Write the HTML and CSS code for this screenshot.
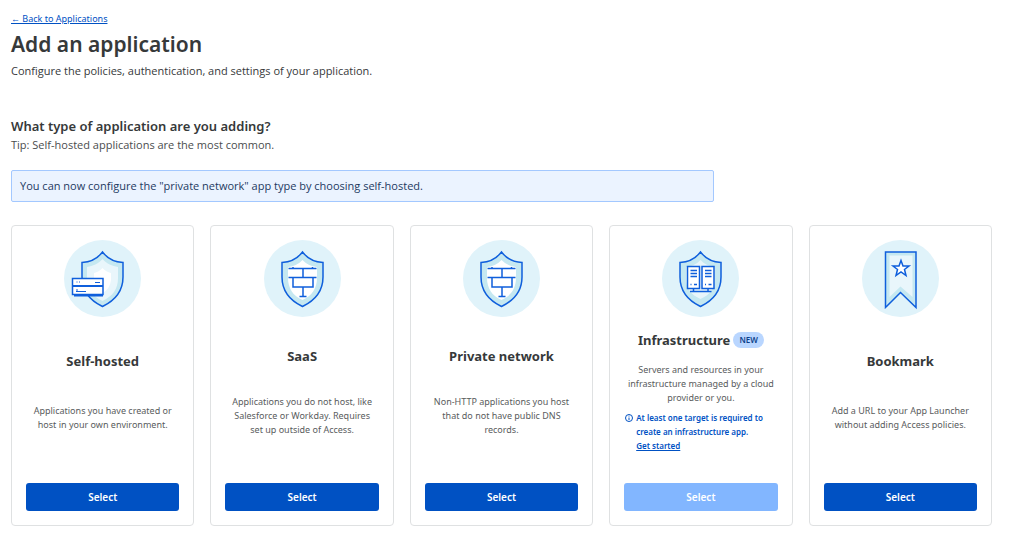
FILE: index.html
```html
<!DOCTYPE html>
<html lang="en">
<head>
  <meta charset="UTF-8">
  <title>Add an application</title>
  <link rel="stylesheet" href="styles.css">
</head>
<body>
  <main>
    <a class="back" href="#">← Back to Applications</a>
    <h1>Add an application</h1>
    <p class="intro">Configure the policies, authentication, and settings of your application.</p>

    <h2>What type of application are you adding?</h2>
    <p class="tip">Tip: Self-hosted applications are the most common.</p>

    <div class="notice">You can now configure the "private network" app type by choosing self-hosted.</div>

    <div class="cards">
      <section class="card">
        <svg class="icon" viewBox="0 0 77 77">
          <circle class="disc" cx="38.5" cy="38.5" r="38.5"/>
          <path class="shade" d="M38.5 12C34 18 27 22 18 22.500V37C18 50 25 60 38.500 66.500C52 60 59 50 59 37V22.500C50 22 43 18 38.500 12Z"/>
          <path class="pale" d="M38.500 19C34 24 29 26 23 27V38C23 49 28 56 38.500 61C49 56 54 49 54 38V27C48 26 43 24 38.500 19Z"/>
          <path class="white" d="M38.500 28Q35 32 30 33V40Q31 49 38.500 53Q46 49 47 40V33Q42 32 38.500 28Z"/>
          <path class="line" d="M38.500 12C34 18 27 22 18 22.500V37C18 50 25 60 38.500 66.500C52 60 59 50 59 37V22.500C50 22 43 18 38.500 12Z"/>
          <path class="line solid" d="M8.500 38.500H39V54.500H8.500Z"/>
          <path class="line thin" d="M31 42.500H36M12 51.500H22M12 50H14M12.500 42H13.500M15 42H16"/>
          <path class="line thick" d="M8 46H39M10 55.500H39"/>
        </svg>
        <div class="info">
          <h3>Self-hosted</h3>
          <p>Applications you have created or host in your own environment.</p>
        </div>
        <button>Select</button>
      </section>

      <section class="card">
        <svg class="icon" viewBox="0 0 77 77">
          <circle class="disc" cx="38.5" cy="38.5" r="38.5"/>
          <path class="shade" d="M38.500 12C34 18 27 22 18 22.500V37C18 50 25 60 38.500 66.500C52 60 59 50 59 37V22.500C50 22 43 18 38.500 12Z"/>
          <path class="white" d="M38.500 20Q33 26 24 27V38C24 48 29 56 38.500 60C48 56 53 48 53 38V27Q44 26 38.500 20Z"/>
          <path class="line" d="M38.500 12C34 18 27 22 18 22.500V37C18 50 25 60 38.500 66.500C52 60 59 50 59 37V22.500C50 22 43 18 38.500 12Z"/>
          <path class="line" d="M24.500 28.500H52.500M24.500 37.500H52.500M39 28.500V37.500M29 37.500V47H49V37.500M39 47V56.500M35.500 56.500H42.500M29 27V28M48.500 27V28"/>
        </svg>
        <div class="info">
          <h3>SaaS</h3>
          <p>Applications you do not host, like Salesforce or Workday. Requires set up outside of Access.</p>
        </div>
        <button>Select</button>
      </section>

      <section class="card">
        <svg class="icon" viewBox="0 0 77 77">
          <circle class="disc" cx="38.5" cy="38.5" r="38.5"/>
          <path class="shade" d="M38.500 12C34 18 27 22 18 22.500V37C18 50 25 60 38.500 66.500C52 60 59 50 59 37V22.500C50 22 43 18 38.500 12Z"/>
          <path class="white" d="M38.500 20Q33 26 24 27V38C24 48 29 56 38.500 60C48 56 53 48 53 38V27Q44 26 38.500 20Z"/>
          <path class="line" d="M38.500 12C34 18 27 22 18 22.500V37C18 50 25 60 38.500 66.500C52 60 59 50 59 37V22.500C50 22 43 18 38.500 12Z"/>
          <path class="line" d="M24.500 28.500H52.500M24.500 37.500H52.500M39 28.500V37.500M29 37.500V47H49V37.500M39 47V56.500M35.500 56.500H42.500M29 27V28M48.500 27V28"/>
        </svg>
        <div class="info">
          <h3>Private network</h3>
          <p>Non-HTTP applications you host that do not have public DNS records.</p>
        </div>
        <button>Select</button>
      </section>

      <section class="card">
        <svg class="icon" viewBox="0 0 77 77">
          <circle class="disc" cx="38.5" cy="38.5" r="38.5"/>
          <path class="shade" d="M38.500 12C34 18 27 22 18 22.500V37C18 50 25 60 38.500 66.500C52 60 59 50 59 37V22.500C50 22 43 18 38.500 12Z"/>
          <path class="pale" d="M38.500 20Q33 26 24 27V38C24 48 29 55 38.500 59C48 55 53 48 53 38V27Q44 26 38.500 20Z"/>
          <path class="line" d="M38.500 12C34 18 27 22 18 22.500V37C18 50 25 60 38.500 66.500C52 60 59 50 59 37V22.500C50 22 43 18 38.500 12Z"/>
          <path class="line solid" d="M25.500 26.500H37.500V48.500H25.500ZM40 26.500H52V48.500H40Z"/>
          <path class="line" d="M28.500 30.500H35M28.500 33.500H35M28.500 36.500H35M43 30.500H49.500M43 33.500H49.500M43 36.500H49.500M28.500 44.500H29.500M32 44.500H35M43 44.500H44M46.500 44.500H49.500M31.500 48.500V51.500M46 48.500V51.500M28 51.500H49.500"/>
        </svg>
        <div class="info">
          <h3>Infrastructure <span class="badge">NEW</span></h3>
          <p>Servers and resources in your infrastructure managed by a cloud provider or you.</p>
          <div class="note">
            <svg viewBox="0 0 10 10"><circle cx="5" cy="5" r="3.500"/><path d="M5 4.500V7M5 2.700V3.500"/></svg>
            <div>At least one target is required to create an infrastructure app.<br><a href="#">Get started</a></div>
          </div>
        </div>
        <button disabled>Select</button>
      </section>

      <section class="card">
        <svg class="icon" viewBox="0 0 77 77">
          <circle class="disc" cx="38.5" cy="38.5" r="38.5"/>
          <path class="shade" d="M23.500 12H54V67.500L38.500 52.500L23.500 67.500Z"/>
          <path class="pale" d="M27.500 15.500H50.500V57L38.500 46.500L27.500 57Z"/>
          <path class="line" d="M23.500 12H54V67.500L38.500 52.500L23.500 67.500Z"/>
          <path class="line solid" d="M39 20.500L41 26H47L42.500 29.500L44 35.500L39 32L34 35.500L35.500 29.500L31 26H37Z"/>
        </svg>
        <div class="info">
          <h3>Bookmark</h3>
          <p>Add a URL to your App Launcher without adding Access policies.</p>
        </div>
        <button>Select</button>
      </section>
    </div>
  </main>
</body>
</html>
```
FILE: styles.css
```css
body {
  font-family: "Noto Sans", "Open Sans", sans-serif;
  font-size: 11px;
  line-height: 18px;
  color: #36393a;
  background: #fff;
  margin: 0;
}
main {
  padding: 10px 32px 14px 11px;
}
h1, h2, h3, p {
  margin: 0;
}
a {
  color: #0051c3;
}
.back {
  display: block;
  width: fit-content;
  font-size: 9px;
}
h1 {
  font-size: 21px;
  font-weight: 600;
  line-height: 32px;
}
.intro, .tip, .notice {
  font-family: "Open Sans", sans-serif;
}
.intro {
  margin-top: 2px;
}
h2 {
  font-size: 13px;
  font-weight: 600;
  line-height: 20px;
  margin-top: 36px;
}
.tip {
  color: #4a4d4e;
}
.notice {
  box-sizing: border-box;
  max-width: 703px;
  margin: 16px 0 23px;
  padding: 6px 8px;
  border: 1px solid #a3c8ff;
  border-radius: 2px;
  background: #ebf3ff;
  color: #1d3a5f;
}
.cards {
  display: grid;
  grid-template-columns: repeat(5, 1fr);
  gap: 16px;
}
.card {
  display: flex;
  flex-direction: column;
  align-items: center;
  padding: 14px;
  border: 1px solid #dfe1e2;
  border-radius: 4px;
  text-align: center;
}
.icon {
  width: 77px;
  height: 77px;
}
.disc {
  fill: #e0f3fa;
}
.shade {
  fill: #c5e8f1;
}
.pale {
  fill: #e9f6fb;
}
.white {
  fill: #fff;
}
.line {
  fill: none;
  stroke: #0f5fdc;
  stroke-width: 1.5;
}
.solid {
  fill: #fff;
}
.thin {
  stroke-width: 1;
}
.thick {
  stroke-width: 2;
}
.info {
  flex: 1;
  display: flex;
  flex-direction: column;
  justify-content: space-evenly;
  min-height: 149px;
}
.info h3 {
  display: flex;
  justify-content: center;
  align-items: center;
  gap: 3px;
  font-size: 13px;
  font-weight: 700;
  line-height: 20px;
}
.info p {
  padding: 0 3px;
  font-size: 9px;
  line-height: 14px;
  color: #595c5d;
}
.badge {
  padding: 0 6px;
  border-radius: 8px;
  background: #b9d6ff;
  color: #0b3f8a;
  font-size: 8px;
  font-weight: 600;
  line-height: 16px;
}
.note {
  display: flex;
  gap: 2px;
  margin-top: -6px;
  color: #0051c3;
  font-size: 8px;
  font-weight: 600;
  line-height: 14px;
  text-align: left;
}
.note a {
  color: inherit;
}
.note svg {
  flex: none;
  width: 10px;
  height: 10px;
  margin-top: 2px;
  fill: none;
  stroke: #0051c3;
}
.card button {
  width: 100%;
  height: 28px;
  margin-top: 17px;
  border: none;
  border-radius: 3px;
  background: #0051c3;
  color: #fff;
  font-family: inherit;
  font-size: 10px;
  font-weight: 600;
  cursor: pointer;
}
.card button:disabled {
  background: #82b6ff;
  cursor: default;
}
```
